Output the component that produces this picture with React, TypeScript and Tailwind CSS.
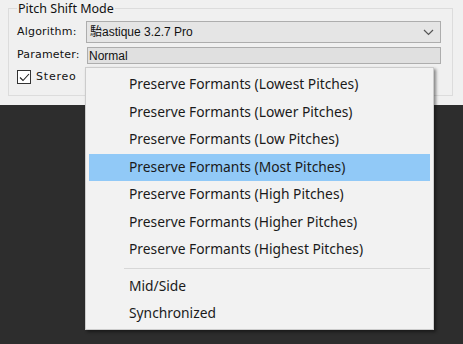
import React from 'react';

const items = [
  'Preserve Formants (Lowest Pitches)',
  'Preserve Formants (Lower Pitches)',
  'Preserve Formants (Low Pitches)',
  'Preserve Formants (Most Pitches)',
  'Preserve Formants (High Pitches)',
  'Preserve Formants (Higher Pitches)',
  'Preserve Formants (Highest Pitches)',
];

const MenuItem: React.FC<{ label: string; active?: boolean }> = ({ label, active }) => (
  <div
    className={`h-[27.5px] flex items-center pl-[40px] text-[13.8px] text-[#1a1a1a] ${active ? 'bg-[#91c9f7]' : ''}`}
  >
    {label}
  </div>
);

export default function App() {
  return (
    <div className="relative w-[463px] h-[344px] bg-[#2d2d2d] overflow-hidden" style={{ fontFamily: '"Liberation Sans", sans-serif' }}>
      {/* Top panel */}
      <div className="h-[105px] bg-[#f0f0f0] pl-[8px] pr-[10px]">
        <fieldset className="border border-[#dcdcdc] h-[96px] pl-[8px] pr-[11px]">
          <legend className="px-[1px] text-[12.5px] leading-[17px] text-[#111]" style={{ fontFamily: '"Noto Sans", sans-serif' }}>Pitch Shift Mode</legend>
          <div className="flex items-center h-[22px] mt-[4px] text-[11px] text-[#111] tracking-[0.2px]" style={{ fontFamily: '"DejaVu Sans", sans-serif' }}>
            <span className="w-[69px]">Algorithm:</span>
            <div className="flex-1 h-[22px] bg-[#e5e5e5] border border-[#adadad] flex items-center pl-[3px] pr-[6px]">
              <span className="flex-1 text-[12px] tracking-normal" style={{ fontFamily: '"Liberation Sans", "Noto Sans CJK JP", sans-serif' }}>駘astique 3.2.7 Pro</span>
              <svg width="11" height="7" viewBox="0 0 11 7" fill="none" stroke="#555" strokeWidth="1.2">
                <path d="M1 1l4.5 4.5L10 1" />
              </svg>
            </div>
          </div>
          <div className="flex items-center h-[17px] mt-[4px] text-[11px] text-[#111] tracking-[0.2px]" style={{ fontFamily: '"DejaVu Sans", sans-serif' }}>
            <span className="w-[70px]">Parameter:</span>
            <div className="flex-1 h-[17px] bg-[#e0e0e0] border border-[#adadad] flex items-center pl-[1px] text-[12px] tracking-normal" style={{ fontFamily: '"Liberation Sans", sans-serif' }}>
              Normal
            </div>
          </div>
          <div className="flex items-center mt-[5px] text-[11px] text-[#111] tracking-[0.8px]" style={{ fontFamily: '"DejaVu Sans", sans-serif' }}>
            <div className="w-[14px] h-[14px] border border-[#333] bg-white flex items-center justify-center">
              <svg width="11" height="9" viewBox="0 0 11 9" fill="none" stroke="#222" strokeWidth="1.1">
                <path d="M1 4.5l3 3L10 1" />
              </svg>
            </div>
            <span className="ml-[5px]">Stereo</span>
          </div>
        </fieldset>
      </div>

      {/* Dropdown menu */}
      <div
        className="absolute left-[85px] top-[67px] w-[349px] h-[263px] bg-[#f2f2f2] border border-[#cccccc] p-[3px] shadow-[2px_2px_3px_rgba(0,0,0,0.45)]"
        style={{ fontFamily: '"Noto Sans", sans-serif' }}
      >
        {items.map((label, i) => (
          <MenuItem key={label} label={label} active={i === 3} />
        ))}
        <div className="h-[9px] flex items-center pl-[35px]">
          <div className="h-px w-full bg-[#d7d7d7]" />
        </div>
        <MenuItem label="Mid/Side" />
        <MenuItem label="Synchronized" />
      </div>
    </div>
  );
}
